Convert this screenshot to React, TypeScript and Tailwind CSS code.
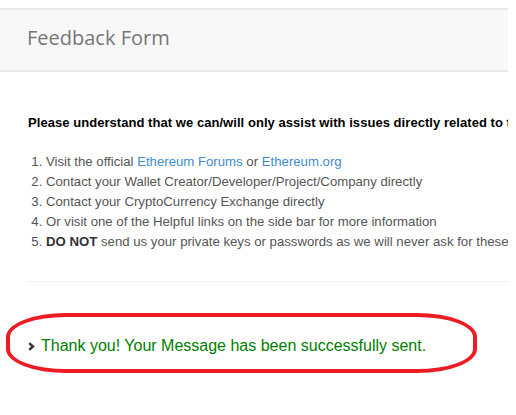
import React from "react";

const steps: React.ReactNode[] = [
  <>
    Visit the official <a className="text-[#428bca]">Ethereum Forums</a> or{" "}
    <a className="text-[#428bca]">Ethereum.org</a>
  </>,
  <>Contact your Wallet Creator/Developer/Project/Company directly</>,
  <>Contact your CryptoCurrency Exchange directly</>,
  <>Or visit one of the Helpful links on the side bar for more information</>,
  <>
    <b className="text-[#333]">DO NOT</b> send us your private keys or passwords as we will never ask for these
  </>,
];

export default function App() {
  return (
    <div className="relative w-[516px] h-[415px] bg-white overflow-hidden font-['Liberation_Sans',Arial,sans-serif]">
      <div className="w-[508px] overflow-hidden pt-2">
        {/* Header */}
        <div className="h-[64px] border-y-2 border-[#e8e8e8] bg-[#f8f8f8] flex items-center pl-[27px] pb-[4px]">
          <h1 className="text-[20px] text-[#777] font-['Open_Sans',sans-serif] whitespace-nowrap">
            Feedback Form
          </h1>
        </div>

        {/* Body */}
        <div className="pl-[28px] pt-[41px]">
          <p className="text-[13px] font-bold text-black whitespace-nowrap tracking-[0.05px]">
            Please understand that we can/will only assist with issues directly related to this service
          </p>

          <ol className="mt-[19px] pl-[18px] list-decimal text-[13.2px] leading-[20px] text-[#555] whitespace-nowrap">
            {steps.map((s, i) => (
              <li key={i}>{s}</li>
            ))}
          </ol>

          <div className="mt-[29px] border-t border-[#eee]" />

          <div className="mt-[52px] flex items-center gap-[6px]">
            <svg width="7" height="9" viewBox="0 0 7 9" className="shrink-0 mt-[1px]">
              <path d="M1.2 1.2 L5 4.5 L1.2 7.8" fill="none" stroke="#333" strokeWidth="2.4" />
            </svg>
            <span className="text-[16px] text-[#008000] whitespace-nowrap">
              Thank you! Your Message has been successfully sent.
            </span>
          </div>
        </div>
      </div>

      {/* red annotation */}
      <div className="absolute left-[6px] top-[313px] w-[471px] h-[60px] border-[4px] border-[#ed1c24] rounded-[60px/24px]" />
    </div>
  );
}
